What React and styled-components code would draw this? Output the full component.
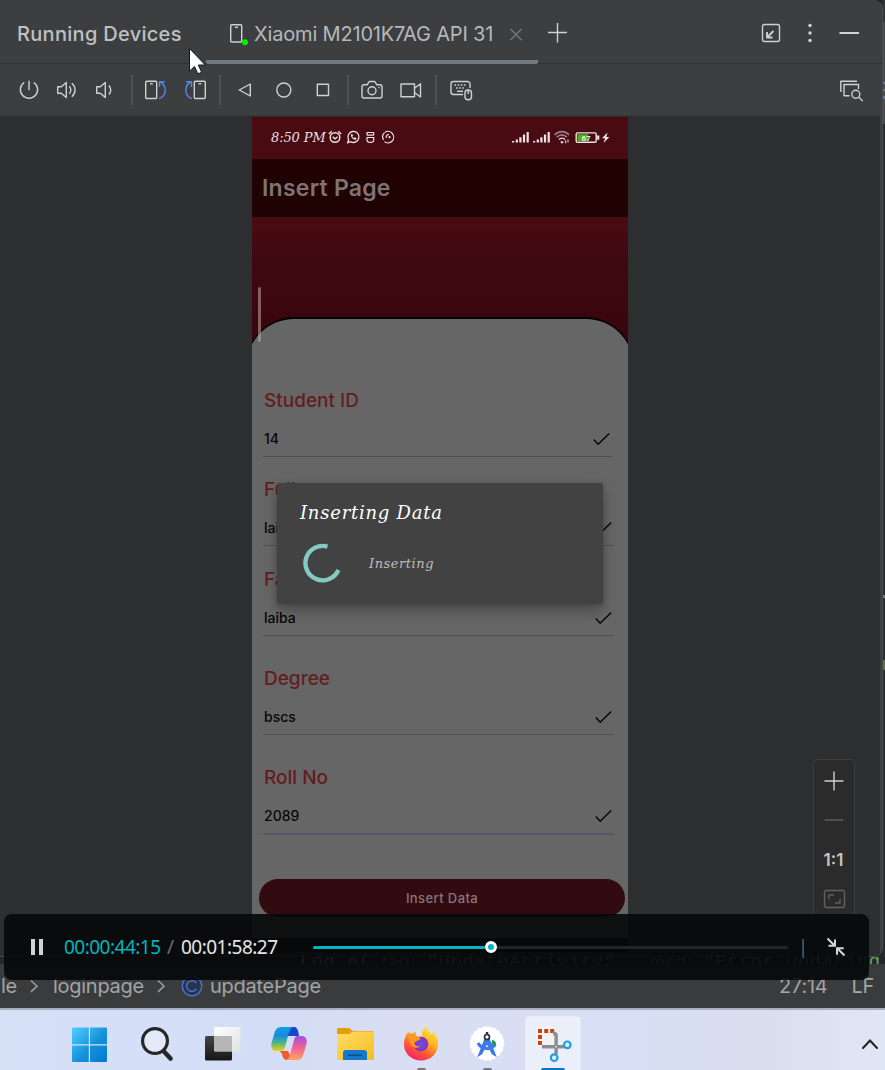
import React from 'react';
import styled, { createGlobalStyle } from 'styled-components';

const GlobalStyle = createGlobalStyle`
  * { box-sizing: border-box; }
  body { margin: 0; background: #3c3d3f; overflow: hidden; }
  svg { display: block; flex: none; }
`;

const ui = `Inter, "Liberation Sans", sans-serif`;
const typewriter = `"DejaVu Serif", serif`;

const Screen = styled.div`
  position: relative;
  width: 885px;
  height: 1070px;
  overflow: hidden;
  display: flex;
  flex-direction: column;
  background: #3c3d3f;
  font-family: ${ui};
  white-space: nowrap;
`;

/* ---------- tool window ---------- */
const Workbench = styled.div`
  display: flex;
  height: 964px;
  background: #252627;
`;
const ToolWindow = styled.section`
  width: 883px;
  height: 957px;
  border-radius: 0 9px 9px 0;
  background: #3c3e40;
  border-right: 1px solid #4a4b4d;
  border-bottom: 1px solid #48494b;
  display: flex;
  flex-direction: column;
  overflow: hidden;
`;
const EditorEdge = styled.div`
  flex: 1;
  height: 957px;
  background: linear-gradient(#35373a 0 22px, #494b4d 22px 124px, #2b2c2e 124px);
  display: flex;
  flex-direction: column;
  align-items: flex-end;
`;
const EdgeMark = styled.i`
  width: 2px;
  height: ${(p) => p.$h}px;
  margin-top: ${(p) => p.$gap}px;
  background: ${(p) => p.$color};
`;
const Header = styled.header`
  height: 64px;
  flex: none;
  display: flex;
  border-bottom: 1px solid #303133;
`;
const Title = styled.h1`
  margin: 0;
  padding-left: 17px;
  width: 206px;
  font: 500 20px/68px ${ui};
  letter-spacing: 0.3px;
  color: #bfc1c3;
`;
const Tab = styled.div`
  width: 332px;
  height: 64px;
  display: flex;
  align-items: center;
  padding: 7px 0 0 19px;
  border-bottom: 4px solid #747a82;
  border-radius: 0 0 2px 2px;
  color: #b6b8ba;
  font-size: 20px;
  letter-spacing: -0.17px;
`;
const TabLabel = styled.span`
  width: 249px;
  margin-left: 5px;
  padding-top: 1px;
`;
const AddButton = styled.div`
  padding: 21px 0 0 8px;
`;
const HeaderActions = styled.div`
  margin-left: auto;
  margin-right: 21px;
  padding-top: 21px;
  display: flex;
  gap: 15px;
`;
const Toolbar = styled.div`
  height: 52px;
  flex: none;
  display: flex;
  align-items: center;
  padding: 1px 0 0 17px;
  border-bottom: 1px solid #37393b;
`;
const ToolIcon = styled.svg`
  width: 24px;
  height: 24px;
  margin-left: ${(p) => p.$gap ?? 0}px;
  margin-right: ${(p) => p.$end ?? 0}px;
  fill: none;
  stroke: ${(p) => p.$color ?? '#ced0d2'};
  stroke-width: ${(p) => p.$weight ?? 1.4};
  stroke-linejoin: round;
`;
const Separator = styled.i`
  width: 2px;
  height: 30px;
  margin-left: ${(p) => p.$gap}px;
  background: #4f5153;
`;
const Spacer = styled.div`flex: 1;`;

const DeviceArea = styled.main`
  width: 880px;
  flex: 1;
  background: #2c2e2f;
  padding: 1px 0 0 252px;
  display: flex;
  align-items: flex-start;
`;

/* ---------- mirrored phone ---------- */
const Phone = styled.div`
  position: relative;
  width: 376px;
  height: 835px;
  overflow: hidden;
  display: flex;
  flex-direction: column;
  background: linear-gradient(#470b11 0 110px, #400810 140px, #38060c 230px);
`;
const StatusLine = styled.div`
  height: 42px;
  padding: 1px 18px 3px 19px;
  display: flex;
  align-items: center;
  justify-content: space-between;
`;
const Clock = styled.span`
  width: 57px;
  padding-top: 1px;
  font: italic 400 13px/20px ${typewriter};
  letter-spacing: -0.1px;
  color: #ecdfe0;
`;
const StatusGroup = styled.div`
  display: flex;
  align-items: center;
`;
const AppBar = styled.div`
  height: 57.5px;
  flex: none;
  padding-left: 10px;
  background: #200202;
  color: #7e7474;
  font: 600 23px/58px ${ui};
  letter-spacing: 0.25px;
`;
const Hero = styled.div`height: 100px; flex: none;`;
const Sheet = styled.div`
  margin: 0 -6px;
  flex: 1;
  border: solid #060102;
  border-width: 2.5px 1px 0;
  border-radius: 48px 48px 0 0;
  background: #666;
  padding: 67px 15px 0 16px;
`;
const Field = styled.div`
  height: ${(p) => p.$h}px;
  width: ${(p) => p.$w ?? 351}px;
  display: flex;
  flex-direction: column;
`;
const FieldLabel = styled.label`
  padding-left: 1px;
  font: 500 19px/30px ${ui};
  color: #631d1e;
`;
const FieldInput = styled.div`
  height: ${(p) => (p.$focused ? 42 : 41)}px;
  padding: 9px 2px 0 1px;
  display: flex;
  justify-content: space-between;
  border-bottom: ${(p) => (p.$focused ? '2px solid #55556a' : '1px solid #505053')};
  font: 500 14px/28px ${ui};
  color: #070707;
`;
const CheckIcon = styled.svg`
  width: 17px;
  height: 14px;
  margin-top: 7px;
  fill: none;
  stroke: #080808;
  stroke-width: 1.5;
`;
const SubmitButton = styled.div`
  width: 366px;
  height: 38px;
  margin: 17px 0 0 -4px;
  border-radius: 19px;
  background: #310b10;
  color: #8a7678;
  text-align: center;
  font: 500 13px/39px ${ui};
  letter-spacing: 0.4px;
`;
const NavBar = styled.div`
  height: 14px;
  flex: none;
  background: #000;
`;
const ScrollThumb = styled.i`
  position: absolute;
  left: 6px;
  top: 170px;
  width: 3px;
  height: 55px;
  border-radius: 2px;
  background: rgba(190, 170, 170, 0.55);
`;
const Dialog = styled.div`
  position: absolute;
  left: 25px;
  top: 366px;
  width: 326px;
  height: 121px;
  border-radius: 2px;
  background: #424242;
  box-shadow: 0 7px 14px rgba(0, 0, 0, 0.28), 0 1px 5px rgba(0, 0, 0, 0.14);
  padding: 17px 24px 0 23px;
`;
const DialogTitle = styled.div`
  font: italic 400 18px/26px ${typewriter};
  letter-spacing: 0.76px;
  color: #fff;
`;
const DialogBody = styled.div`
  display: flex;
  align-items: center;
  padding-top: 17px;
  font: italic 400 13px/20px ${typewriter};
  letter-spacing: 0.55px;
  color: #bdbdbd;
`;
const DialogMessage = styled.span`padding-top: 2px;`;
const Spinner = styled.svg`
  width: 40px;
  height: 40px;
  margin: 0 27px 0 2px;
  fill: none;
  stroke: #82cac2;
  stroke-width: 4.4;
`;
const ZoomPanel = styled.div`
  position: absolute;
  left: 813px;
  top: 759px;
  width: 42px;
  height: 162px;
  border: 1px solid #3c3d3e;
  border-radius: 5px;
  background: #2b2b2b;
  display: flex;
  flex-direction: column;
  align-items: center;
  padding-top: 9px;
  padding-right: 1px;
  gap: 15px;
`;
const ZoomLabel = styled.span`
  padding-top: 1px;
  font: 600 17px/24px ${ui};
  color: #c4c6c7;
`;
const CodeLine = styled.div`
  position: absolute;
  left: 300px;
  top: 951px;
  height: 22px;
  display: flex;
  gap: 11px;
  font: 400 19px/22px "Liberation Mono", monospace;
  letter-spacing: 0.4px;
  color: #5da568;
`;
const Plain = styled.span`color: #a9b1b8;`;
const Hint = styled.span`font: 400 18px/22px ${ui}; color: #76797c;`;

/* ---------- recording player ---------- */
const Player = styled.div`
  position: absolute;
  left: 4px;
  top: 914px;
  width: 865px;
  height: 66px;
  border-radius: 8px;
  background: rgba(7, 8, 10, 0.91);
  display: flex;
  align-items: center;
  font: 400 19px/26px "Noto Sans", "Open Sans", sans-serif;
  letter-spacing: -0.52px;
`;
const Pause = styled.div`
  width: 12px;
  height: 16px;
  margin: 0 21px 0 27px;
  border: solid #d2d2d2;
  border-width: 0 4px;
`;
const Elapsed = styled.span`width: 103px; color: #00b5bf;`;
const Slash = styled.span`width: 14px; color: #72706e;`;
const Total = styled.span`width: 132px; color: #e6e6e6;`;
const Track = styled.div`
  width: 475px;
  height: 3px;
  border-radius: 2px;
  background: #242425;
  display: flex;
  align-items: center;
`;
const Played = styled.i`
  width: 172px;
  height: 3px;
  border-radius: 2px;
  background: #00b5c2;
`;
const Knob = styled.i`
  width: 12px;
  height: 12px;
  border-radius: 50%;
  border: 3px solid #fff;
  background: #00b5c2;
`;
const PlayerDivider = styled.i`
  width: 2px;
  height: 19px;
  margin: 3px 22px 0 14px;
  background: linear-gradient(90deg, #24465f 50%, #704729 50%);
`;

/* ---------- status bar ---------- */
const StatusBar = styled.footer`
  position: relative;
  height: 46px;
  flex: none;
  display: flex;
  padding: 0 11px 2px 1px;
  background: #3a3b3c;
  border-bottom: 2px solid #a9adbf;
  color: #a2a4a6;
  font: 400 20px/45px ${ui};
  letter-spacing: -0.27px;
`;
const Crumb = styled.span`width: ${(p) => p.$w}px;`;
const CrumbArrow = styled.svg`
  width: 16px;
  height: 16px;
  margin: 14px 11px 0 9px;
  fill: none;
  stroke: #97999b;
  stroke-width: 1.6;
`;
const ClassBadge = styled.svg`
  width: 22px;
  height: 22px;
  margin: 11px 7px 0 1px;
  fill: #29344c;
  stroke: #4672cf;
  stroke-width: 1.5;
`;
const StatusItem = styled.span`margin-left: 24px;`;

/* ---------- desktop taskbar ---------- */
const Taskbar = styled.nav`
  height: 60px;
  flex: none;
  display: flex;
  padding: 0 3px 0 58px;
  background: linear-gradient(90deg, #d6e1f8 0, #d4ddf6 30%, #d9def2 48%, #d7e0f6 70%, #dadeee 86%, #dfe6f5);
`;
const TaskIcon = styled.svg`
  width: 66px;
  height: 60px;
`;
const Chevron = styled.svg`
  width: 18px;
  height: 12px;
  margin: 28px 3px 0 auto;
  fill: none;
  stroke: #222;
  stroke-width: 2;
  stroke-linecap: round;
`;

const Check = () => (
  <CheckIcon viewBox="0 0 17 14"><path d="M.8 7.5 5.2 12.2 16.2 1.5" /></CheckIcon>
);

const Signal = () => (
  <svg width="18" height="12" viewBox="0 0 18 12" fill="#f0e4e5">
    <path d="M0 10h2.2v1.6H0zM3.7 8.6h2.2v3H3.7zM7.3 6.2h2.2v5.4H7.3zM10.9 3.6h2.2v8h-2.2zM14.6 1h2.2v10.6h-2.2z" />
  </svg>
);

const fields = [
  { label: 'Student ID', value: '14', h: 89.5, w: 349 },
  { label: 'Fullname', value: 'laiba', h: 89.5 },
  { label: 'Father', value: 'laiba', h: 99 },
  { label: 'Degree', value: 'bscs', h: 99 },
  { label: 'Roll No', value: '2089', h: 99, focused: true },
];

function PhoneStatus() {
  return (
    <StatusLine>
      <StatusGroup>
        <Clock>8:50 PM</Clock>
        <svg width="68" height="16" viewBox="0 0 68 16" fill="none" stroke="#f0e4e5" strokeWidth="1.4">
          <circle cx="7" cy="8.5" r="4.8" /><path d="M.8 5 3.8 2.300M13.200 5 10.200 2.300M4.600 7.800 7 9.800l2.600-2" />
          <path d="M19.700 13.700l.9-3.200a5.500 5.500 0 1 1 2.100 2.200z" strokeWidth="1.300" />
          <path d="M23 5.300c-.4 3.200 2.200 5.700 5.200 5.300l.2-1.700-1.700-.6-.8.8c-.8-.4-1.300-.9-1.600-1.700l.7-.8-.6-1.400z" fill="#f0e4e5" stroke="none" />
          <path d="M38.500 3.500h7.500M39 6.200h6.700M39 8.500v2.300c0 3.500 6.700 3.500 6.700 0V8.500zM39 3.500v2.700M45.700 3.500v2.700" strokeWidth="1.200" />
          <path d="M57 3.300a5.700 5.700 0 1 1-.6 9.300M56.600 3.600a5.700 5.700 0 0 0-1 7.300M61 5.300a3 3 0 0 0-2.800 3.500" strokeWidth="1.200" /><circle cx="61.500" cy="8.200" r="1.100" fill="#f0e4e5" stroke="none" />
        </svg>
      </StatusGroup>
      <StatusGroup>
        <Signal />
        <svg width="3" height="1" />
        <Signal />
        <svg width="59" height="15" viewBox="0 0 59 15" fill="none" stroke="#f0e4e5" strokeWidth="1.400">
          <g transform="translate(3 -.5)">
            <path d="M.6 5.500c4-4.500 10.500-4.500 14.500 0M2.800 7.800c3-3.200 7-3.200 10.100 0" stroke="#9d7c80" strokeWidth="1.600" />
            <path d="M5 10.100c2-2 4.200-2 6 0M6.800 12l1.200 1.200L9.200 12" /><path d="M11.700 10.800v3M14 10v3" strokeWidth="1" />
          </g>
          <rect x="25.200" y="2.900" width="20" height="9.400" rx="1.400" /><path d="M47.200 5.500v4.200" strokeWidth="2.200" />
          <path d="M26.500 4.200h10.800v6.900H26.500z" fill="#4fae18" stroke="none" />
          <text x="30.500" y="10.500" fill="#fff" stroke="none" fontFamily="Roboto, sans-serif" fontSize="8" fontWeight="500">67</text>
          <path d="M56.600 2.500 50.900 8.300h3.200l-1.500 4.700 5.700-6h-3z" fill="#f0e4e5" stroke="none" />
        </svg>
      </StatusGroup>
    </StatusLine>
  );
}

function MirroredPhone() {
  return (
    <Phone>
      <PhoneStatus />
      <AppBar>Insert Page</AppBar>
      <Hero />
      <Sheet>
        {fields.map((f) => (
          <Field key={f.label} $h={f.h} $w={f.w}>
            <FieldLabel>{f.label}</FieldLabel>
            <FieldInput $focused={f.focused}>{f.value}<Check /></FieldInput>
          </Field>
        ))}
        <SubmitButton>Insert Data</SubmitButton>
      </Sheet>
      <NavBar />
      <ScrollThumb />
      <Dialog>
        <DialogTitle>Inserting Data</DialogTitle>
        <DialogBody>
          <Spinner viewBox="0 0 40 40"><path d="M25.500 3.600A17.200 17.200 0 1 0 36.400 27" /></Spinner>
          <DialogMessage>Inserting</DialogMessage>
        </DialogBody>
      </Dialog>
    </Phone>
  );
}

function DeviceToolbar() {
  return (
    <Toolbar>
      <ToolIcon viewBox="0 0 24 24"><path d="M12 2.800v9.400M7.200 4.500a8.600 8.600 0 1 0 9.600 0" /></ToolIcon>
      <ToolIcon $gap={14} viewBox="0 0 24 24"><path d="M2.700 8.800h3.600l5-4.300v15l-5-4.300H2.700zM14.300 8.300c2 2 2 5.400 0 7.400M16.800 5.200c4.300 3.800 4.300 9.800 0 13.600" /></ToolIcon>
      <ToolIcon $gap={13} viewBox="0 0 24 24"><path d="M4.700 8.800h3.600l5-4.300v15l-5-4.300H4.700zM16.800 7.500c2.600 2.600 2.600 6.400 0 9" /></ToolIcon>
      <Separator $gap={15} />
      <ToolIcon $gap={11} viewBox="0 0 24 24"><rect x="1.700" y="3.200" width="11" height="17.300" rx="1" /><path d="M6 5.800h2.800" /><path stroke="#548af7" d="M15 20.700c7.600-2.500 8-12 2-16.300M15.500 9V3.700h5.300" /></ToolIcon>
      <ToolIcon $gap={15} viewBox="0 0 24 24"><rect x="11.300" y="3.200" width="11" height="17.300" rx="1" /><path d="M15.500 5.800h2.800" /><path stroke="#548af7" d="M9 20.700C1.400 18.200 1 8.700 7 4.400M8.500 9V3.700H3.200" /></ToolIcon>
      <Separator $gap={12} />
      <ToolIcon $gap={12} viewBox="0 0 24 24"><path d="M17.300 6v12L6.300 12z" /></ToolIcon>
      <ToolIcon $gap={15} viewBox="0 0 24 24"><circle cx="11.800" cy="12" r="7" /></ToolIcon>
      <ToolIcon $gap={15} viewBox="0 0 24 24"><rect x="6.300" y="6.300" width="11.200" height="11.200" /></ToolIcon>
      <Separator $gap={12} />
      <ToolIcon $gap={11} viewBox="0 0 24 24"><path d="M4 6.700h3.200l2-3.200h5.600l2 3.200H20a2 2 0 0 1 2 2V18a2 2 0 0 1-2 2H4a2 2 0 0 1-2-2V8.700a2 2 0 0 1 2-2z" /><circle cx="12" cy="12.800" r="4" /><path d="M18.300 9.600h1.400" /></ToolIcon>
      <ToolIcon $gap={15} viewBox="0 0 24 24"><path d="M2 6h13.500v12.800H2zM15.500 10.300l6-4.500v13.200l-6-4.500" /></ToolIcon>
      <Separator $gap={12} />
      <ToolIcon $gap={12} viewBox="0 0 24 24">
        <path d="M14 16.500H4.500a2.500 2.500 0 0 1-2.500-2.500V6a2.500 2.500 0 0 1 2.500-2.500h14A2.500 2.500 0 0 1 21 6v4" />
        <path strokeDasharray="1.600 1.500" d="M5.500 7h12M7 10h9" /><path d="M8 13.300h6" />
        <rect x="16" y="12" width="6.500" height="9.800" rx="3" /><path d="M19.200 12v4" />
      </ToolIcon>
      <Spacer />
      <ToolIcon $end={19} viewBox="0 0 24 24"><path d="M1.800 14V3.300h16.200M10.500 17.800H5V6.500h14.500V11" /><circle cx="16.800" cy="16.200" r="4" /><path d="m19.700 19.100 4 4" /></ToolIcon>
    </Toolbar>
  );
}

function DesktopTaskbar() {
  return (
    <Taskbar>
      <TaskIcon viewBox="0 0 66 60">
        <defs><linearGradient id="win" x1="14" y1="17" x2="49" y2="52" gradientUnits="userSpaceOnUse"><stop stopColor="#4fd0ff" /><stop offset=".55" stopColor="#1792dc" /><stop offset="1" stopColor="#0078d0" /></linearGradient></defs>
        <path fill="url(#win)" d="M15 17.500h15.800v16.700H14V18.500a1 1 0 0 1 1-1zM32 17.500h16a1 1 0 0 1 1 1v15.700H32zM14 35.400h16.800V52H15a1 1 0 0 1-1-1zM32 35.400h17V51a1 1 0 0 1-1 1H32z" />
      </TaskIcon>
      <TaskIcon viewBox="0 0 66 60" fill="none" stroke="#272727">
        <circle cx="31" cy="31" r="12.400" strokeWidth="3.200" fill="#e2e9f8" /><path d="m39.500 41 7 7.500" strokeWidth="4.600" strokeLinecap="round" />
      </TaskIcon>
      <TaskIcon viewBox="0 0 66 60">
        <defs>
          <linearGradient id="dark" x1="0" y1="0" x2="0" y2="1"><stop stopColor="#444" /><stop offset="1" stopColor="#171717" /></linearGradient>
          <linearGradient id="light" x1="0" y1="0" x2="1" y2="1"><stop stopColor="#fff" /><stop offset="1" stopColor="#e0e0e2" /></linearGradient>
        </defs>
        <rect x="24" y="17" width="26.500" height="24.700" rx="1.500" fill="url(#light)" /><rect x="15" y="26" width="27" height="24.500" rx="1.500" fill="url(#dark)" />
        <path d="M24 26h18v15.700H25.500a1.500 1.500 0 0 1-1.500-1.500z" fill="#b5b5b5" />
      </TaskIcon>
      <TaskIcon viewBox="0 0 66 60">
        <defs>
          <linearGradient id="cpA" x1="0" y1="0" x2="0" y2="1"><stop stopColor="#139fe8" /><stop offset=".35" stopColor="#168be0" /><stop offset=".65" stopColor="#45b78a" /><stop offset="1" stopColor="#f4cf10" /></linearGradient>
          <linearGradient id="cpB" x1="0" y1="0" x2="0" y2="1"><stop stopColor="#a34fe8" /><stop offset=".5" stopColor="#f0648f" /><stop offset="1" stopColor="#ffa465" /></linearGradient>
        </defs>
        <path d="M32 17h6c3 0 4 2.500 5 9H32z" fill="#1549c6" />
        <path d="M24 41h8l4 9h-4c-4 0-5-2-6-6z" fill="#ee5b33" />
        <path d="M26 17h11c-3 1-4 5-5 9l-3 11c-1 3-2 4-4 4h-5c-4 0-5.500-4-4.500-8l3-10c1-4 3-6 7.500-6z" fill="url(#cpA)" />
        <path d="M41 26h5c4 0 5.500 4 4.500 8l-3 10c-1.200 4-3 6-7 6H30c3-1 4-5 5-9l3-11c.7-3 1.500-4 3-4z" fill="url(#cpB)" />
      </TaskIcon>
      <TaskIcon viewBox="0 0 66 60">
        <defs><linearGradient id="folder" x1="0" y1="0" x2="1" y2="1"><stop stopColor="#ffdc69" /><stop offset="1" stopColor="#f8bd1f" /></linearGradient></defs>
        <path d="M16 18h11l4 3h20v6H15v-8a1 1 0 0 1 1-1z" fill="#dfa009" /><path d="M15 24h12l4-2.500h20a1 1 0 0 1 1 1V50H15z" fill="url(#folder)" />
        <path d="M21 50v-7a3 3 0 0 1 3-3h18a3 3 0 0 1 3 3v7z" fill="#1278ca" /><path d="M26 45.200h14" stroke="#07518f" strokeWidth="1.600" />
      </TaskIcon>
      <TaskIcon viewBox="0 0 66 60">
        <defs>
          <linearGradient id="fox" x1=".8" y1="0" x2=".25" y2="1"><stop stopColor="#fff03c" /><stop offset=".4" stopColor="#ffb022" /><stop offset=".7" stopColor="#ff5535" /><stop offset="1" stopColor="#ed1d70" /></linearGradient>
          <radialGradient id="globe"><stop stopColor="#6653dc" /><stop offset="1" stopColor="#8a30c2" /></radialGradient>
        </defs>
        <path d="M38 16c.5 4 4 5.500 6.500 9l.2-4C48 24 50 29 50 34c0 10-7.600 16.500-17 16.500S16 43.500 16 34.500c0-5 1.500-9.500 5-13l.7 4c2-2 4.300-3.500 6.300-4l-.2 5h6c0-4.500 1-8 4.200-10.500z" fill="url(#fox)" />
        <circle cx="33" cy="34" r="7.300" fill="url(#globe)" />
        <path d="M18 24c5-2 10 1 14.500 4.500-1 2.500-5 2-6 4.500 0 3 3 4 6 2.500-4 5-10.500 1-11-5z" fill="#ff9820" />
        <rect x="29" y="58" width="9" height="4" rx="2" fill="#75777f" />
      </TaskIcon>
      <TaskIcon viewBox="0 0 66 60">
        <circle cx="33" cy="33.500" r="16.400" fill="#fff" /><circle cx="33" cy="33.500" r="16.400" fill="none" stroke="#fff" strokeWidth="1.800" strokeDasharray="3.500 1.650" />
        <path d="M38 30a4.500 4.500 0 0 1 4 6l-5 1z" fill="#219a48" />
        <path d="M31.500 28.500h3L41 45l-2.500-1.500L33 32.500l-5.500 11L25 45z" fill="#3d7bea" stroke="#3d7bea" strokeWidth="1.800" />
        <path d="M24 33c3.500 6.500 12 7.500 17 2" fill="none" stroke="#3d7bea" strokeWidth="3.200" />
        <circle cx="33" cy="27" r="2.500" fill="#fff" stroke="#28303b" strokeWidth="1.700" /><path d="M33 22v2.500" stroke="#28303b" strokeWidth="2.400" />
        <rect x="29" y="58" width="9" height="4" rx="2" fill="#75777f" />
      </TaskIcon>
      <TaskIcon viewBox="0 0 66 60">
        <rect x="5" y="6" width="56" height="60" rx="4" fill="#ebeffa" stroke="#dce1ee" strokeWidth=".6" />
        <path d="M16 17h19v19H16z" fill="#f3f3f4" />
        <path d="M18 19h4v4h-4zM24.200 19h4v4h-4zM30.200 19h4v4h-4zM18 25h4v4h-4zM18 31h4v4h-4z" fill="#ce410c" />
        <path d="M33 23.500h1.500a1.600 1.600 0 0 1 1.600 1.600V44M22 36.700h22" fill="none" stroke="#898d92" strokeWidth="3.400" />
        <g fill="#e3f2fb" stroke="#1d9fe0" strokeWidth="2.200"><circle cx="47.300" cy="34.800" r="3.300" /><circle cx="34.200" cy="47.700" r="3.300" /></g>
        <circle cx="36" cy="36.700" r="1" fill="#d9dadb" />
        <rect x="21" y="58" width="24" height="4" rx="2" fill="#0077d4" />
      </TaskIcon>
      <Chevron viewBox="0 0 18 12"><path d="m2 10 7-7.500 7 7.500" /></Chevron>
    </Taskbar>
  );
}

const PointerIcon = styled.svg`
  position: absolute;
  left: 188px;
  top: 46px;
`;

export default function App() {
  return (
    <Screen>
      <GlobalStyle />
      <Workbench>
        <ToolWindow>
          <Header>
            <Title>Running Devices</Title>
            <Tab>
              <ToolIcon viewBox="0 0 24 24"><rect x="5.700" y="2.700" width="11" height="17.300" rx="1" /><path d="M10 5.300h3" /><circle cx="20" cy="20.200" r="3" fill="#00f000" stroke="none" /></ToolIcon>
              <TabLabel>Xiaomi M2101K7AG API 31</TabLabel>
              <ToolIcon $color="#727476" $weight={1.5} viewBox="0 0 24 24"><path d="m7.500 7 11 11M18.500 7l-11 11" /></ToolIcon>
            </Tab>
            <AddButton><ToolIcon viewBox="0 0 24 24"><path d="M11.500 2v19.500M2 11.500h19" /></ToolIcon></AddButton>
            <HeaderActions>
              <ToolIcon viewBox="0 0 24 24"><rect x="3.500" y="3.500" width="17" height="17" rx="2" /><path d="m14.500 10-6.500 6.500M8 11v5.500h5.500" strokeWidth="1.900" /></ToolIcon>
              <ToolIcon viewBox="0 0 24 24"><g fill="#ced0d2" stroke="none"><circle cx="12" cy="4.500" r="1.700" /><circle cx="12" cy="12" r="1.700" /><circle cx="12" cy="19.500" r="1.700" /></g></ToolIcon>
              <ToolIcon $weight={1.8} viewBox="0 0 24 24"><path d="M2.500 12H22" /></ToolIcon>
            </HeaderActions>
          </Header>
          <DeviceToolbar />
          <DeviceArea><MirroredPhone /></DeviceArea>
        </ToolWindow>
        <EditorEdge>
          <EdgeMark $gap={82} $h={2} $color="#6671a4" />
          <EdgeMark $gap={5} $h={2} $color="#6671a4" />
          <EdgeMark $gap={5} $h={3} $color="#6671a4" />
          <EdgeMark $gap={496} $h={3} $color="#777a7d" />
          <EdgeMark $gap={62} $h={10} $color="#5b7148" />
        </EditorEdge>
      </Workbench>
      <CodeLine>
        <Plain>Log.e(</Plain><Hint>tag:</Hint><span>"UpdateActivity",</span><Hint>&nbsp; msg:</Hint><span>"Error updating</span>
      </CodeLine>
      <StatusBar>
        <Crumb $w={16}>le</Crumb>
        <CrumbArrow viewBox="0 0 16 16"><path d="m5 2.500 6 5.700-6 5.700" /></CrumbArrow>
        <Crumb $w={91}>loginpage</Crumb>
        <CrumbArrow viewBox="0 0 16 16"><path d="m5 2.500 6 5.700-6 5.700" /></CrumbArrow>
        <ClassBadge viewBox="0 0 22 22"><circle cx="11" cy="11" r="9.800" /><path fill="none" d="M15.300 8a5.300 5.300 0 1 0 0 6" /></ClassBadge>
        <Crumb $w={120}>updatePage</Crumb>
        <Spacer />
        <StatusItem>27:14</StatusItem>
        <StatusItem>LF</StatusItem>
      </StatusBar>
      <DesktopTaskbar />
      <ZoomPanel>
        <ToolIcon viewBox="0 0 24 24"><path d="M12 2.500v19M2.500 12h19" /></ToolIcon>
        <ToolIcon $color="#5e6061" viewBox="0 0 24 24"><path d="M2.500 12h19" /></ToolIcon>
        <ZoomLabel>1:1</ZoomLabel>
        <ToolIcon $color="#5e6061" viewBox="0 0 24 24"><rect x="2.500" y="3.500" width="20" height="17" rx="2" /><path d="M7 12V8h5M18 12v4h-5" /></ToolIcon>
      </ZoomPanel>
      <Player>
        <Pause />
        <Elapsed>00:00:44:15</Elapsed>
        <Slash>/</Slash>
        <Total>00:01:58:27</Total>
        <Track><Played /><Knob /></Track>
        <PlayerDivider />
        <svg width="20" height="20" viewBox="0 0 20 20" fill="none" stroke="#d5d5d5" strokeWidth="2"><path d="m1.500 1.500 6.800 6.800M9 2.500v6.300H2.500M18.500 18.500l-6.800-6.800M11 17.800v-6.500h6.700" /></svg>
      </Player>
      <PointerIcon width="20" height="30" viewBox="0 0 20 30"><path d="M1.500 2.500v22.700l5-4.800 3.400 7.400 3.700-1.600-3.300-7.200h7z" fill="#fff" stroke="#161616" strokeWidth="1" /></PointerIcon>
    </Screen>
  );
}
